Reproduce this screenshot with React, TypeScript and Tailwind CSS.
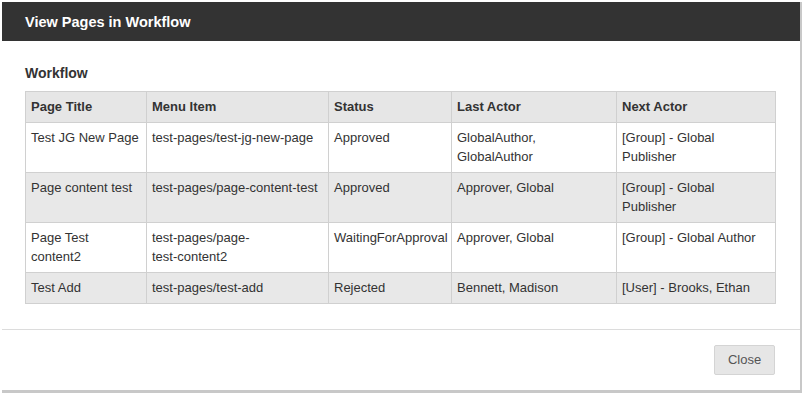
import React from "react"

type Row = {
  title: string
  menu: string
  status: string
  last: string
  next: string
}

const rows: Row[] = [
  {
    title: "Test JG New Page",
    menu: "test-pages/test-jg-new-page",
    status: "Approved",
    last: "GlobalAuthor, GlobalAuthor",
    next: "[Group] - Global Publisher",
  },
  {
    title: "Page content test",
    menu: "test-pages/page-content-test",
    status: "Approved",
    last: "Approver, Global",
    next: "[Group] - Global Publisher",
  },
  {
    title: "Page Test content2",
    // the original breaks after "page-"
    menu: "test-pages/page-\ntest-content2",
    status: "WaitingForApproval",
    last: "Approver, Global",
    next: "[Group] - Global Author",
  },
  {
    title: "Test Add",
    menu: "test-pages/test-add",
    status: "Rejected",
    last: "Bennett, Madison",
    next: "[User] - Brooks, Ethan",
  },
]

const cell = "border border-[#d0d0d0] px-[5px] pt-[5px] pb-[6px] align-top"

export default function App() {
  return (
    <div className="h-[394px] w-[804px] bg-white pl-[2px] pt-[2px] font-['Liberation_Sans',Arial,sans-serif] text-[#333]">
      <div className="w-[800px] border-r-2 border-b-[3px] border-[#c8c8c8] bg-white">
        {/* title bar */}
        <div className="flex h-[39px] items-center bg-[#333] px-[23px] pt-[3px]">
          <h1 className="text-[14.5px] font-bold text-white">View Pages in Workflow</h1>
        </div>

        <div className="px-[23px] pt-[22px] pb-[25px]">
          <h2 className="mb-[8px] text-[14px] leading-[20px] font-bold">Workflow</h2>
          <table className="w-[750px] table-fixed border-collapse text-[13px] leading-[19px]">
            <colgroup>
              <col className="w-[121px]" />
              <col className="w-[182px]" />
              <col className="w-[123px]" />
              <col className="w-[165px]" />
              <col className="w-[159px]" />
            </colgroup>
            <thead>
              <tr className="bg-[#e6e6e6] text-left">
                <th className={cell}>Page Title</th>
                <th className={cell}>Menu Item</th>
                <th className={cell}>Status</th>
                <th className={cell}>Last Actor</th>
                <th className={cell}>Next Actor</th>
              </tr>
            </thead>
            <tbody>
              {rows.map((r, i) => (
                <tr key={r.menu} className={i % 2 === 1 ? "bg-[#e8e8e8]" : "bg-white"}>
                  <td className={cell}>{r.title}</td>
                  <td className={cell + " whitespace-pre-line"}>{r.menu}</td>
                  <td className={cell + " whitespace-nowrap"}>{r.status}</td>
                  <td className={cell}>{r.last}</td>
                  <td className={cell}>{r.next}</td>
                </tr>
              ))}
            </tbody>
          </table>
        </div>

        <div className="flex justify-end border-t border-[#dcdcdc] px-[25px] pt-[15px] pb-[15px]">
          <button className="h-[30px] w-[61px] rounded-[2px] border border-[#d4d4d4] bg-[#e6e6e6] text-[13px] text-[#555]">
            Close
          </button>
        </div>
      </div>
    </div>
  )
}
